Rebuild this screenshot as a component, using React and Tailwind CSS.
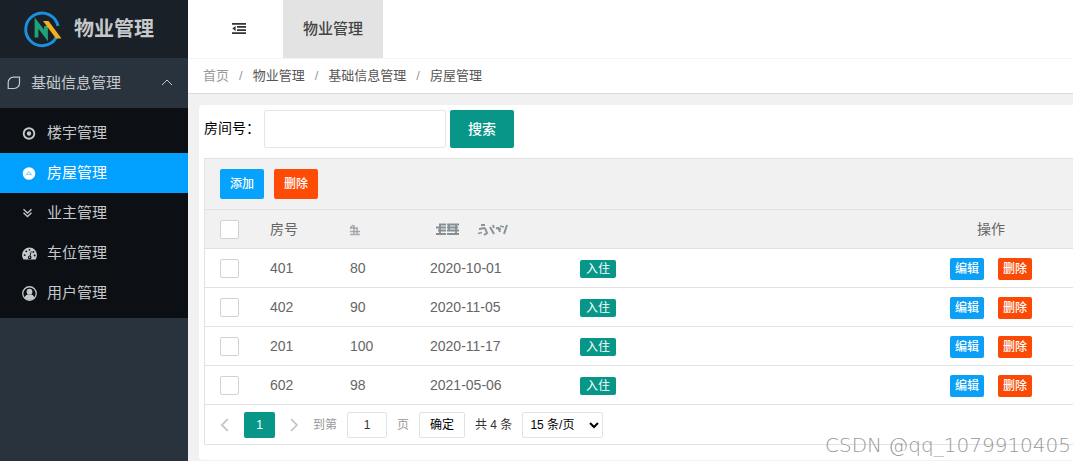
import React from "react";

const rooms = [
  { no: "401", area: "80", date: "2020-10-01" },
  { no: "402", area: "90", date: "2020-11-05" },
  { no: "201", area: "100", date: "2020-11-17" },
  { no: "602", area: "98", date: "2021-05-06" },
];

function Logo() {
  return (
    <svg className="size-10 shrink-0" viewBox="0 0 40 40" fill="none" aria-hidden="true">
      <path d="M34.200 28.500A16.300 16.300 0 1 1 36 17" stroke="#1b8fe0" strokeWidth="3" />
      <path d="M14.500 28.500V14L24 26.500V17" stroke="#1fa27a" strokeWidth="3.800" />
      <path d="M21 12h5.500L39.500 29.500H34z" fill="#f2b01e" />
    </svg>
  );
}

function LeafIcon() {
  return (
    <svg className="size-3.5 shrink-0" viewBox="0 0 14 14" fill="none" stroke="currentColor" strokeWidth="1.200" aria-hidden="true">
      <path d="M1.200 12.500V6.500A5.300 5.300 0 0 1 6.500 1.200H12.500V7.200A5.300 5.300 0 0 1 7.200 12.500Z" />
    </svg>
  );
}

function TargetIcon() {
  return (
    <svg className="size-[15px]" viewBox="0 0 15 15" fill="none" aria-hidden="true">
      <circle cx="7" cy="7.500" r="5.300" stroke="currentColor" strokeWidth="1.900" />
      <circle cx="7" cy="7.500" r="2.200" fill="currentColor" />
    </svg>
  );
}

function RoomIcon() {
  return (
    <svg className="size-[15px]" viewBox="0 0 15 15" fill="none" aria-hidden="true">
      <circle cx="7" cy="7.500" r="6.300" fill="currentColor" />
      <path d="M3.800 9.300 6.800 5.300 10 9.300M5 8.300h4" stroke="#6cc4ff" strokeWidth=".9" />
    </svg>
  );
}

function DoubleDownIcon() {
  return (
    <svg className="size-[15px]" viewBox="0 0 15 15" fill="none" stroke="currentColor" strokeWidth="1.300" aria-hidden="true">
      <path d="M1.500 3.300 5.500 7 9.500 3.300M1.500 6.800 5.500 10.500 9.500 6.800" />
    </svg>
  );
}

function GaugeIcon() {
  return (
    <svg className="size-[15px]" viewBox="0 0 14 14" aria-hidden="true">
      <path d="M1.300 12.500A7 7 0 0 1 0 8.500a7 7 0 0 1 14 0 7 7 0 0 1-1.300 4z" fill="currentColor" />
      <g fill="#0c0f14">
        <circle cx="2.500" cy="8.500" r=".9" />
        <circle cx="4" cy="5" r=".9" />
        <circle cx="7" cy="3.600" r=".8" />
        <circle cx="10.600" cy="5.500" r=".9" />
        <circle cx="11.800" cy="8.800" r=".9" />
        <path d="M8.300 4.800 9 5 8 9.200a1.700 1.700 0 1 1-1-.2z" />
      </g>
      <circle cx="7" cy="10.600" r=".7" fill="currentColor" />
    </svg>
  );
}

function UserIcon() {
  return (
    <svg className="size-[15px]" viewBox="0 0 14 14" aria-hidden="true">
      <circle cx="7" cy="7" r="6.300" fill="none" stroke="currentColor" strokeWidth="1.200" />
      <circle cx="7" cy="5.300" r="2.700" fill="currentColor" />
      <path d="M2.300 10.500C3.200 9 4.500 8.300 5.300 8h3.400c.8.300 2.100 1 3 2.500A5.600 5.600 0 0 1 7 13a5.600 5.600 0 0 1-4.700-2.500z" fill="currentColor" />
    </svg>
  );
}

function FoldIcon() {
  return (
    <svg className="size-3.5" viewBox="0 0 14 14" fill="#333" aria-hidden="true">
      <path d="M0 1h14v1.800H0zM5 4.100h9v1.700H5zM5 7.200h9v1.700H5zM0 10.200h14V12H0zM3.600 3.900v5.200L.3 6.500z" />
    </svg>
  );
}

function Chevron({ d, className }) {
  return (
    <svg className={className} viewBox="0 0 12 12" fill="none" stroke="currentColor" aria-hidden="true">
      <path d={d} />
    </svg>
  );
}

function AreaSmudge() {
  return (
    <svg className="h-4 w-5" viewBox="0 0 20 16" fill="none" stroke="#8b9196" aria-hidden="true">
      <g className="blur-[0.5px]">
        <path d="M-1 7h9M-2 10.500h12M-2 13.500h12" strokeWidth="1.500" opacity=".7" />
        <path d="M3 4 0 7.500M4 4v9M7 7v6" strokeWidth="1.500" opacity=".7" />
      </g>
    </svg>
  );
}

function DateSmudge() {
  return (
    <svg className="h-4 w-20" viewBox="0 0 80 16" fill="none" aria-hidden="true">
      <g className="blur-[0.5px]">
        <g stroke="#7b858c" strokeWidth="1.900" opacity=".9">
          <path d="M9 3.500h7M6 6.500h10M8 9.500h8M6 13h10M10 3v10" />
          <path d="M17 3.500h12M17 6.500h11M17 9.500h12M17 13h12M19 3v6M26 3v10" />
        </g>
        <g stroke="#7f888e" strokeWidth="2" opacity=".9">
          <path d="M51 4h4M49 8l6-1M55 7l2 5-3 2M60 6l4 7M63 4l1 3M68 6l2 5M66 7l5 1M77 4l-3 9" />
        </g>
        <path d="M48 12.500l4-1M70 5l4 1" stroke="#5e7780" strokeWidth="1.600" opacity=".7" />
      </g>
    </svg>
  );
}

const menu = [
  { label: "楼宇管理", Icon: TargetIcon },
  { label: "房屋管理", Icon: RoomIcon, active: true },
  { label: "业主管理", Icon: DoubleDownIcon },
  { label: "车位管理", Icon: GaugeIcon },
  { label: "用户管理", Icon: UserIcon },
];

function Sidebar() {
  return (
    <aside className="w-[188px] shrink-0 bg-[#28333e] text-[15px] text-[#c6c8ca]">
      <div className="flex h-[58px] items-center gap-3 bg-[#192027] pl-[22px] text-xl font-bold">
        <Logo />
        <span>物业管理</span>
      </div>
      <nav>
        <button className="flex h-[50px] w-full items-center gap-2.5 pr-[15px] pl-[7px] text-left" aria-expanded="true">
          <LeafIcon />
          <span className="grow">基础信息管理</span>
          <Chevron className="size-3" d="M1 8 6 3 11 8" />
        </button>
        <ul className="bg-[#0c0f14] py-[5px]">
          {menu.map(({ label, Icon, active }) => (
            <li key={label}>
              <a
                href="#"
                aria-current={active ? "page" : undefined}
                className={
                  active
                    ? "flex h-10 items-center gap-2.5 bg-[#01a0ff] pl-[22px] text-white"
                    : "flex h-10 items-center gap-2.5 pl-[22px]"
                }
              >
                <Icon />
                <span>{label}</span>
              </a>
            </li>
          ))}
        </ul>
      </nav>
    </aside>
  );
}

const box = "block size-[19px] appearance-none rounded-[2px] border border-[#d2d2d2] bg-white";
const cell = "h-[39px] border-b border-[#e2e2e2] px-[15px] text-left font-normal";

function RoomTable() {
  return (
    <table className="w-full table-fixed border-separate border-spacing-0 text-sm text-[#666]">
      <colgroup>
        <col className="w-[50px]" />
        <col className="w-20" />
        <col className="w-20" />
        <col className="w-[150px]" />
        <col />
        <col className="w-[164px]" />
      </colgroup>
      <thead className="bg-[#f1f1f1]">
        <tr>
          <th className={cell}>
            <input type="checkbox" aria-label="全选" className={box} />
          </th>
          <th className={cell}>房号</th>
          <th className={cell} aria-label="面积">
            <AreaSmudge />
          </th>
          <th className={cell} aria-label="日期">
            <DateSmudge />
          </th>
          <th className={cell} aria-label="状态" />
          <th className={cell}>
            <div className="text-center">操作</div>
          </th>
        </tr>
      </thead>
      <tbody>
        {rooms.map((room) => (
          <tr key={room.no}>
            <td className={cell}>
              <input type="checkbox" aria-label={room.no} className={box} />
            </td>
            <td className={cell}>{room.no}</td>
            <td className={cell}>{room.area}</td>
            <td className={cell}>{room.date}</td>
            <td className={cell}>
              <span className="mt-[2px] block h-[18px] w-9 rounded-[2px] bg-[#079688] text-center text-xs leading-[18px] text-white">
                入住
              </span>
            </td>
            <td className={cell}>
              <div className="flex justify-center gap-3.5 pt-[2px] text-xs font-medium text-white">
                <button className="h-[22px] w-[34px] rounded-[2px] bg-[#0ba0f5]">编辑</button>
                <button className="h-[22px] w-[34px] rounded-[2px] bg-[#fa4a05]">删除</button>
              </div>
            </td>
          </tr>
        ))}
      </tbody>
    </table>
  );
}

function Pagination() {
  return (
    <div className="flex h-10 items-center border-b border-[#e2e2e2] pl-3.5 text-xs text-[#333]">
      <button aria-label="上一页" className="text-[#c4c4c4]">
        <Chevron className="size-3.5 stroke-[1.500]" d="M7.500 1 2.500 6 7.500 11" />
      </button>
      <button className="ml-[11px] h-[26px] w-[31px] rounded-[2px] bg-[#079688] text-white" aria-current="page">
        1
      </button>
      <button aria-label="下一页" className="ml-3 text-[#c4c4c4]">
        <Chevron className="size-3.5 stroke-[1.500]" d="M3.500 1 8.500 6 3.500 11" />
      </button>
      <label htmlFor="page" className="ml-3 text-[#999]">
        到第
      </label>
      <input
        id="page"
        defaultValue="1"
        className="ml-2.5 h-[26px] w-10 rounded-[2px] border border-[#e2e2e2] bg-white text-center"
      />
      <span className="ml-2.5 text-[#999]">页</span>
      <button className="ml-2.5 h-[26px] w-[46px] rounded-[2px] border border-[#e2e2e2] bg-white text-black">确定</button>
      <span className="ml-2.5">共 4 条</span>
      <select
        aria-label="每页条数"
        className="ml-2.5 h-[26px] w-[81px] rounded-[2px] border border-[#e2e2e2] bg-white pl-[3px] text-black"
      >
        <option>15 条/页</option>
        <option>30 条/页</option>
      </select>
    </div>
  );
}

export default function App() {
  return (
    <div className="relative flex min-h-screen overflow-hidden bg-[#f1f1f1] font-['Liberation_Sans','Noto_Sans_CJK_SC',sans-serif]">
      <Sidebar />
      <div className="flex min-w-0 grow flex-col">
        <header className="flex h-[58px] bg-white">
          <button aria-label="收起菜单" className="mr-[37px] ml-9 flex w-[22px] items-center justify-end">
            <FoldIcon />
          </button>
          <a href="#" className="flex w-[100px] items-center justify-center bg-[#e3e3e3] text-[15px] font-medium text-[#444]">
            物业管理
          </a>
        </header>
        <nav
          aria-label="面包屑"
          className="flex h-9 items-center gap-2.5 border-t border-b border-t-[#f4f4f4] border-b-[#dcdcdc] bg-white pl-[15px] text-[13px] text-[#555]"
        >
          <a href="#" className="text-[#999]">首页</a>
          <span className="text-[#999]">/</span>
          <a href="#">物业管理</a>
          <span className="text-[#999]">/</span>
          <a href="#">基础信息管理</a>
          <span className="text-[#999]">/</span>
          <span>房屋管理</span>
        </nav>
        <main className="pt-[11px] pl-[11px]">
          <section className="rounded-l-[4px] bg-white pt-[5px] pb-[15px] pl-[5px]">
            <form className="flex text-sm" onSubmit={(e) => e.preventDefault()}>
              <label htmlFor="room" className="w-[60px] pt-2 text-black">
                房间号：
              </label>
              <input id="room" className="h-[38px] w-[182px] rounded-[2px] border border-[#e6e6e6] bg-white px-2.5" />
              <button className="ml-1 h-[38px] w-16 rounded-[2px] bg-[#079688] font-medium text-white">搜索</button>
            </form>
            <div className="mt-2.5 border-t border-l border-[#e2e2e2]">
              <div className="flex h-[51px] items-center gap-2.5 border-b border-[#e2e2e2] bg-[#f1f1f1] pl-[15px] text-xs font-medium text-white">
                <button className="h-[30px] w-11 rounded-[2px] bg-[#07a2fb]">添加</button>
                <button className="h-[30px] w-11 rounded-[2px] bg-[#ff4b05]">删除</button>
              </div>
              <RoomTable />
              <Pagination />
            </div>
          </section>
        </main>
      </div>
      <div className="pointer-events-none absolute right-[2px] bottom-1 font-['DejaVu_Sans',sans-serif] text-xl leading-6 font-extralight text-[#999]">
        CSDN @qq_1079910405
      </div>
    </div>
  );
}
